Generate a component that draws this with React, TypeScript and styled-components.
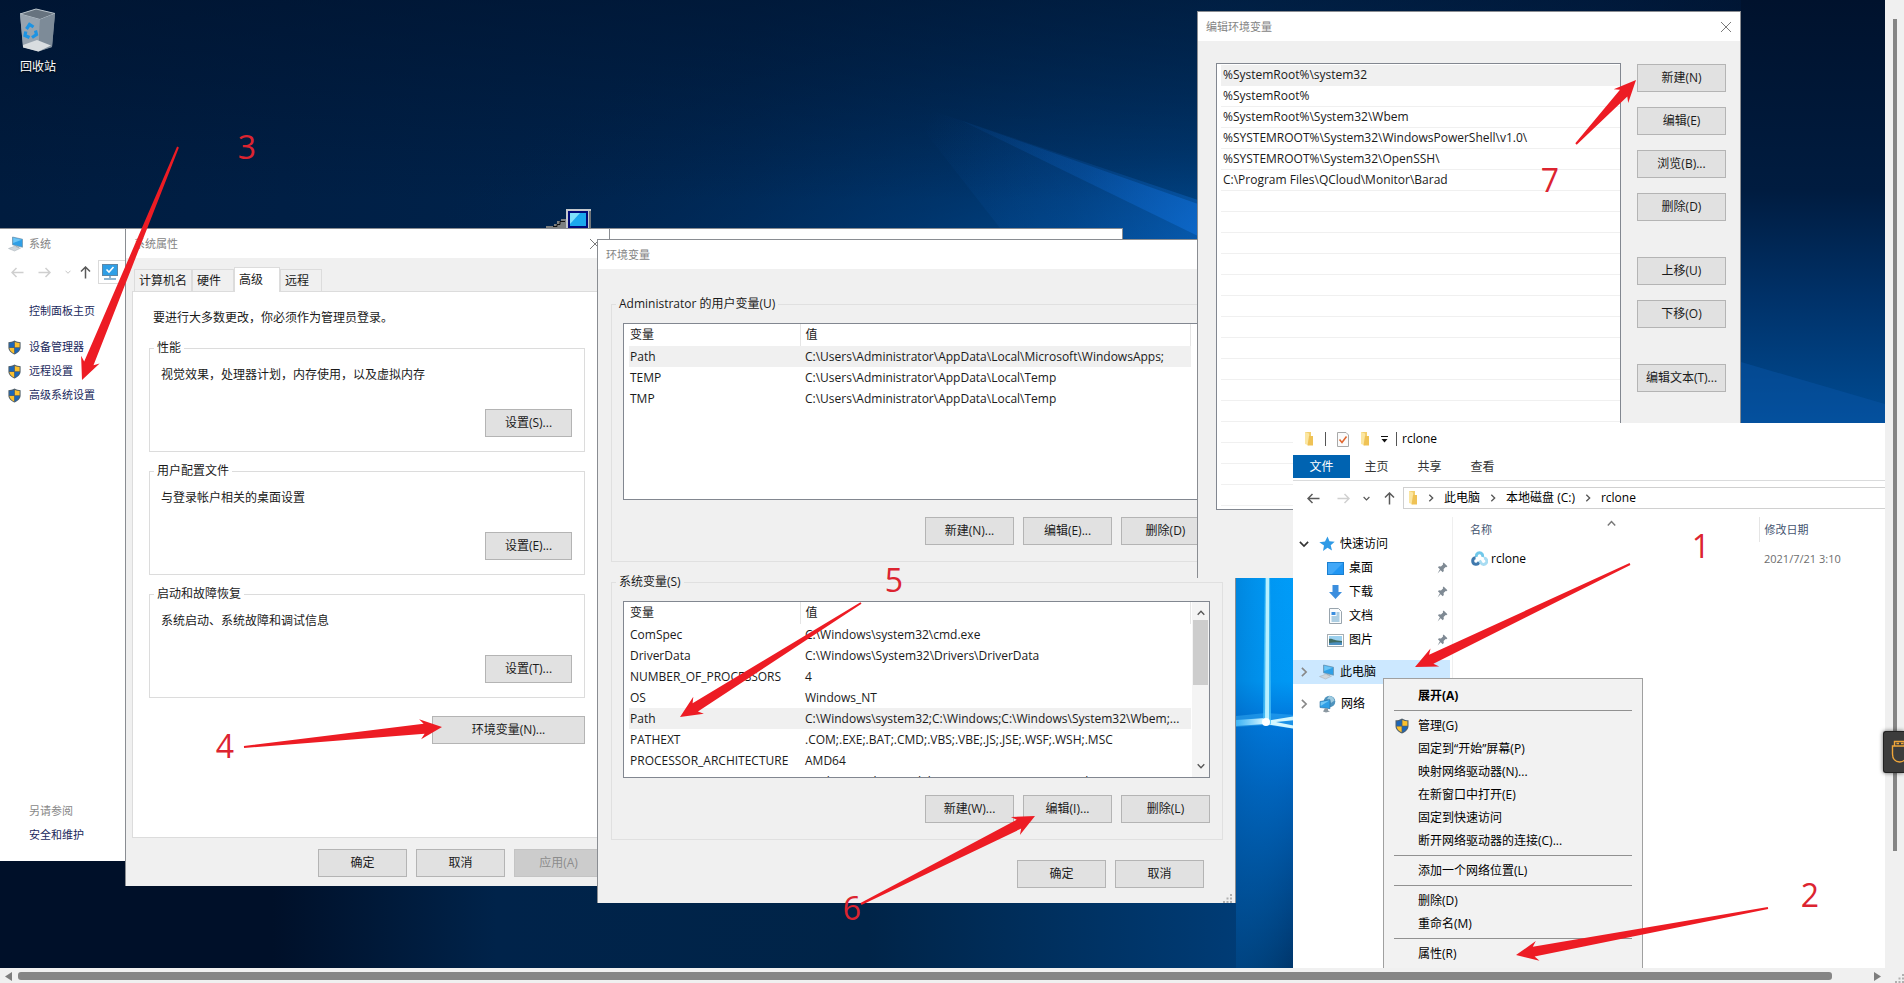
import React from "react";
import styled, { createGlobalStyle, css } from "styled-components";

const GlobalStyle = createGlobalStyle`
  * { box-sizing: border-box; }
  html, body { margin: 0; height: 100%; overflow: hidden; }
  body, button, table, input {
    font-family: "Open Sans", "Noto Sans CJK SC", sans-serif;
    font-size: 12px;
    line-height: 16px;
    color: #1a1a1a;
  }
  a { color: inherit; text-decoration: none; }
  ul { list-style: none; margin: 0; padding: 0; }
  svg { display: block; flex: none; }
`;

/* ---------- page frame ---------- */

const Viewer = styled.div`
  display: grid;
  grid-template-columns: minmax(0, 1fr) 19px;
  grid-template-rows: minmax(0, 1fr) 15px;
  height: 100vh;
  background: #f0f0f0;
  position: relative;
  overflow: hidden;
`;

const Desktop = styled.main`
  position: relative;
  overflow: hidden;
  background: #001a3a;
`;

const VerticalBar = styled.div`
  display: flex;
  justify-content: center;
  padding: 19px 0 117px;
  margin-left: 1px;
`;

const VerticalThumb = styled.div`
  width: 4px;
  background: #858585;
`;

const HorizontalBar = styled.div`
  display: flex;
  align-items: center;
  gap: 6px;
  padding: 1px 4px 0 5px;
`;

const HorizontalThumb = styled.div`
  flex: 1;
  height: 8px;
  margin-right: 36px;
  border-radius: 3px;
  background: #858585;
`;

const Corner = styled.div`
  display: flex;
  justify-content: flex-end;
  align-items: flex-end;
`;

const UsbTab = styled.button`
  position: absolute;
  right: 0;
  top: 731px;
  width: 21px;
  height: 42px;
  padding: 0 0 0 7px;
  border: 1px solid #222;
  border-right: 0;
  border-radius: 3px 0 0 3px;
  background: #3c3c3c;
  box-shadow: 0 0 4px rgba(0, 0, 0, 0.6);
  overflow: hidden;
`;

/* ---------- desktop ---------- */

const Wallpaper = styled.svg`
  position: absolute;
  inset: 0;
`;

const Shortcut = styled.a`
  position: absolute;
  left: 8px;
  top: 8px;
  width: 60px;
  display: flex;
  flex-direction: column;
  align-items: center;
  gap: 7px;
  color: #fff;
  text-shadow: 0 1px 2px #000;
`;

const HiddenShortcut = styled.div`
  position: absolute;
  left: 546px;
  top: 209px;
`;

const Annotations = styled.svg`
  position: absolute;
  inset: 0;
  pointer-events: none;
`;

const StepNumber = styled.text`
  font-size: 32px;
  fill: #dc2430;
  text-anchor: middle;
`;

/* ---------- windows ---------- */

const Frame = styled.section<{ $x: number; $y: number; $w: number; $h: number; $bg?: string }>`
  position: absolute;
  left: ${(p) => p.$x}px;
  top: ${(p) => p.$y}px;
  width: ${(p) => p.$w}px;
  height: ${(p) => p.$h}px;
  display: flex;
  flex-direction: column;
  background: ${(p) => p.$bg ?? "#f0f0f0"};
  border: 1px solid #8a8d92;
  border-bottom: 0;
`;

const TitleBar = styled.header`
  display: flex;
  align-items: center;
  gap: 5px;
  height: 29px;
  flex: none;
  padding: 0 8px;
  background: #fff;
  color: #848484;
  font-size: 11px;
`;

const TitleText = styled.h2`
  flex: 1;
  margin: 0;
  font-size: 11px;
  font-weight: 400;
`;

const IconButton = styled.button`
  display: flex;
  align-items: center;
  justify-content: center;
  padding: 0;
  border: 0;
  background: none;
`;

const CaptionButtons = styled.div`
  display: flex;
  gap: 34px;
  padding-right: 8px;
`;

const PushButton = styled.button<{ $w?: number }>`
  width: ${(p) => p.$w ?? 89}px;
  height: 28px;
  padding: 0;
  flex: none;
  border: 1px solid #b4b4b4;
  background: #e1e1e1;
  white-space: nowrap;
  &:disabled {
    background: #cccccc;
    border-color: #c4c4c4;
    color: #8c8c8c;
  }
`;

const Group = styled.fieldset<{ $edge?: string }>`
  min-width: 0;
  margin: 0;
  padding: 11px 12px 14px 11px;
  border: 1px solid ${(p) => p.$edge ?? "#dcdcdc"};
`;

const GroupTitle = styled.legend`
  margin-left: -7px;
  padding: 0 3px;
  height: 16px;
`;

const ButtonRow = styled.div<{ $top?: number; $right?: number }>`
  display: flex;
  justify-content: flex-end;
  gap: 9px;
  margin-top: ${(p) => p.$top ?? 0}px;
  padding-right: ${(p) => p.$right ?? 0}px;
`;

const NavCluster = styled.div<{ $gap: number }>`
  display: flex;
  align-items: center;
  gap: ${(p) => p.$gap}px;
`;

/* ---------- system window ---------- */

const SystemSide = styled.nav`
  display: flex;
  flex-direction: column;
  flex: 1;
  padding: 0 6px 14px;
  font-size: 11px;
  color: #20285c;
`;

const SystemNav = styled.div`
  display: flex;
  align-items: center;
  height: 28px;
  flex: none;
  padding-left: 11px;
  gap: 14px;
`;

const SystemAddress = styled.div`
  display: flex;
  align-items: center;
  width: 400px;
  height: 24px;
  padding-left: 2px;
  margin-left: -8px;
  border: 1px solid #dadada;
`;

const SideLink = styled.a<{ $top?: number; $muted?: boolean }>`
  display: flex;
  align-items: center;
  gap: 7px;
  height: 24px;
  margin-top: ${(p) => p.$top ?? 0}px;
  padding-left: ${(p) => (p.$top !== undefined ? 23 : 1)}px;
  color: ${(p) => (p.$muted ? "#888" : "#20285c")};
`;

const Shields = styled.div`
  margin: 12px 0 auto;
`;

/* ---------- system properties ---------- */

const TabStrip = styled.div`
  display: flex;
  align-items: flex-end;
  padding: 9px 0 0 8px;
`;

const Tab = styled.button<{ $active?: boolean }>`
  min-width: ${(p) => (p.$active ? 46 : 42)}px;
  height: ${(p) => (p.$active ? 25 : 22)}px;
  padding: 0 4px;
  margin-bottom: ${(p) => (p.$active ? -1 : 0)}px;
  border: 1px solid #dcdcdc;
  border-bottom: 0;
  background: ${(p) => (p.$active ? "#fff" : "#f0f0f0")};
  text-align: left;
  white-space: nowrap;
  z-index: ${(p) => (p.$active ? 1 : 0)};
`;

const TabPanel = styled.div`
  display: flex;
  flex-direction: column;
  height: 547px;
  margin: 0 7px 0 6px;
  padding: 18px 16px 0;
  border: 1px solid #dcdcdc;
  background: #fff;
`;

const Notice = styled.p`
  margin: 0 0 14px 4px;
`;

const Settings = styled.div`
  display: flex;
  flex-direction: column;
  gap: 11px;
`;

const Description = styled.p`
  margin: 0;
`;

/* ---------- environment variables ---------- */

const EnvBody = styled.div`
  display: flex;
  flex-direction: column;
  gap: 12px;
  padding: 27px 12px 0 13px;
`;

const VarGroup = styled(Group)`
  padding-bottom: 16px;
`;

const ListFrame = styled.div`
  display: flex;
  height: 177px;
  padding-left: 5px;
  border: 1px solid #828790;
  background: #fff;
  overflow: hidden;
`;

const VarTable = styled.table`
  flex: 1;
  align-self: flex-start;
  table-layout: fixed;
  border-collapse: collapse;
  width: 562px;
  margin-right: 1px;
  col:first-child { width: 171px; }
  th, td {
    height: 21px;
    padding: 0 0 0 5px;
    text-align: left;
    font-weight: 400;
    white-space: nowrap;
  }
  th { height: 22px; border-right: 1px solid #e5e5e5; }
  th:first-child, td:first-child { padding-left: 1px; }
`;

const VarRow = styled.tr<{ $selected?: boolean }>`
  background: ${(p) => (p.$selected ? "#f0f0f0" : "transparent")};
`;

const ListScroll = styled.div<{ $show: boolean }>`
  display: flex;
  flex-direction: column;
  align-items: center;
  width: 17px;
  padding: 7px 0;
  gap: 3px;
  background: ${(p) => (p.$show ? "#f4f4f4" : "#fff")};
  visibility: ${(p) => (p.$show ? "visible" : "hidden")};
`;

const ListThumb = styled.div`
  width: 15px;
  height: 65px;
  margin-bottom: auto;
  background: #cdcdcd;
`;

const ResizeGrip = styled.div`
  display: flex;
  justify-content: flex-end;
  padding: 6px 3px 0 0;
`;

/* ---------- edit environment variable ---------- */

const EditBody = styled.div`
  display: flex;
  gap: 16px;
  padding: 22px 14px 0 18px;
`;

const PathList = styled.ul`
  flex: 1;
  height: 447px;
  padding: 1px 0 0 4px;
  border: 1px solid #828790;
  background: #fff;
`;

const PathItem = styled.li<{ $selected?: boolean }>`
  height: 21px;
  padding: 2px 0 0 2px;
  border-bottom: 1px solid #f0f0f0;
  background: ${(p) => (p.$selected ? "#f0f0f0" : "#fff")};
  white-space: nowrap;
`;

const ButtonColumn = styled.div`
  display: flex;
  flex-direction: column;
  gap: 36px;
  padding-top: 1px;
`;

const ButtonCluster = styled.div`
  display: flex;
  flex-direction: column;
  gap: 15px;
`;

/* ---------- explorer ---------- */

const Explorer = styled.section`
  position: absolute;
  left: 1293px;
  right: 0;
  top: 423px;
  bottom: 0;
  display: flex;
  flex-direction: column;
  background: #fff;
  color: #000;
`;

const QuickBar = styled.header`
  display: flex;
  align-items: center;
  height: 32px;
  padding-left: 11px;
  gap: 11px;
  flex: none;
`;

const BarSeparator = styled.span`
  width: 1px;
  height: 14px;
  background: #555;
`;

const ExplorerTitle = styled.h2`
  margin: 0 0 0 -6px;
  font-size: 12px;
  font-weight: 400;
`;

const Ribbon = styled.div`
  display: flex;
  height: 26px;
  flex: none;
  border-bottom: 1px solid #dadbdc;
`;

const RibbonTab = styled.button<{ $primary?: boolean }>`
  height: 23px;
  padding: 0;
  width: ${(p) => (p.$primary ? 57 : 53)}px;
  border: 0;
  background: ${(p) => (p.$primary ? "#0063b1" : "transparent")};
  color: ${(p) => (p.$primary ? "#fff" : "#333")};
`;

const AddressRow = styled.div`
  display: flex;
  align-items: center;
  height: 34px;
  flex: none;
  padding-left: 14px;
  gap: 17px;
`;

const Breadcrumb = styled.nav`
  display: flex;
  align-items: center;
  flex: 1;
  gap: 9px;
  height: 22px;
  margin-left: -10px;
  padding-left: 4px;
  border: 1px solid #d0d0d0;
  border-right: 0;
`;

const Content = styled.div`
  display: grid;
  grid-template-columns: 160px minmax(0, 1fr);
  flex: 1;
  padding-top: 2px;
`;

const Tree = styled.nav`
  padding-top: 15px;
  border-right: 1px solid #efefef;
`;

const TreeItem = styled.a<{ $child?: boolean; $selected?: boolean; $gap?: number }>`
  display: flex;
  align-items: center;
  height: 24px;
  gap: 5px;
  margin: ${(p) => p.$gap ?? 0}px 2px 0 0;
  padding: 0 2px 0 ${(p) => (p.$child ? 34 : 6)}px;
  background: ${(p) => (p.$selected ? "#cce8ff" : "transparent")};
`;

const TreeLabel = styled.span`
  flex: 1;
`;

const Twisty = styled.span`
  width: 15px;
`;

const Files = styled.table`
  align-self: start;
  width: 100%;
  table-layout: fixed;
  border-collapse: collapse;
  th, td { padding: 0 0 0 5px; text-align: left; font-weight: 400; }
  th { height: 25px; color: #44546f; font-size: 11px; }
  th:first-child { width: 306px; padding-left: 17px; border-right: 1px solid #e5e5e5; }
  td { height: 34px; color: #6d6d6d; font-size: 11px; }
  td:first-child { padding-left: 18px; }
`;

const SortHead = styled.span`
  display: grid;
  grid-template-columns: 137px auto;
  align-items: start;
  > svg { margin-top: -3px; }
`;

const FileLink = styled.a`
  display: flex;
  align-items: center;
  gap: 3px;
  color: #000;
  font-size: 12px;
`;

const ContextMenu = styled.ul`
  position: absolute;
  left: 90px;
  top: 255px;
  bottom: 0;
  width: 260px;
  padding: 5px 10px 0;
  border: 1px solid #a0a0a0;
  border-bottom: 0;
  background: #f2f2f2;
`;

const MenuItem = styled.button<{ $bold?: boolean }>`
  display: grid;
  grid-template-columns: 16px auto;
  gap: 8px;
  align-items: center;
  width: 100%;
  height: 23px;
  padding: 0;
  border: 0;
  background: none;
  color: #000;
  text-align: left;
  ${(p) => p.$bold && css`font-weight: 700;`}
`;

const MenuRule = styled.li`
  height: 1px;
  margin: 3px 0;
  background: #919191;
`;

/* ---------- icons ---------- */

const CloseIcon = () => (
  <svg width="12" height="12" viewBox="0 0 12 12" stroke="#7a7a7a" fill="none">
    <path d="M1 1l10 10M11 1L1 11" />
  </svg>
);

const ShieldIcon = ({ size = 15 }: { size?: number }) => (
  <svg width={size} height={size} viewBox="0 0 16 16">
    <path d="M8 .5C10 1.800 12.500 2.300 14.500 2.300V8c0 3.600-3 6-6.500 7.500C4.500 14 1.500 11.600 1.500 8V2.300C3.500 2.300 6 1.800 8 .5z" fill="#51606b" />
    <path d="M7.600 2v5.700H2.600V3.300C4.500 3.200 6 2.800 7.600 2z" fill="#1c66b8" />
    <path d="M8.400 2v5.700h5V3.300C11.500 3.200 10 2.800 8.400 2z" fill="#fbc02d" />
    <path d="M7.600 8.400v5.900C5 13 2.800 11 2.600 8.400z" fill="#fbc02d" />
    <path d="M8.400 8.400v5.900c2.600-1.300 4.800-3.300 5-5.900z" fill="#1c66b8" />
  </svg>
);

const ComputerIcon = ({ size = 16 }: { size?: number }) => (
  <svg width={size} height={size} viewBox="0 0 16 16">
    <path d="M4.500 1l10 2.200v8L4.500 8.800z" fill="#2f9fe6" stroke="#6d8fa8" strokeWidth=".7" />
    <path d="M5.200 1.800l8.600 2L5.200 7z" fill="#6cc5f5" />
    <path d="M8 10l3 .8v2L7 13z" fill="#9aa7b0" />
    <path d="M.5 12.500l6-2.200 6 1.900-6 2.800z" fill="#cfd6db" stroke="#a3adb4" strokeWidth=".5" />
  </svg>
);

const NetworkIcon = () => (
  <svg width="17" height="18" viewBox="0 0 17 18">
    <circle cx="10.500" cy="6.500" r="5.800" fill="#4f93bd" />
    <path d="M10 1c3-.5 5 2 5.600 4.500L12 8l-1-3-3-1z" fill="#9fcbe0" />
    <path d="M1 6.500l10-1.800v9L1 12.500z" fill="#2f9fe6" stroke="#2b6f9f" strokeWidth=".6" />
    <path d="M1.600 7.200l8.800-1.600L1.600 11z" fill="#74c8f5" />
    <path d="M6 13.300l3 .3v1.800l2 1-4 1-3-1z" fill="#8b98a1" />
  </svg>
);

const MonitorIcon = () => (
  <svg width="18" height="18" viewBox="0 0 18 18">
    <rect x="1.500" y="1.500" width="15" height="11" fill="#2f9fe6" stroke="#5f87a5" />
    <path d="M5.500 6.500l2.500 2.500 4.500-5" stroke="#fff" strokeWidth="1.600" fill="none" />
    <path d="M8 13h2v2h5v2H3v-2h5z" fill="#8fb6d1" />
  </svg>
);

const Arrow = ({ dir, color = "#5a5a5a" }: { dir: "left" | "right" | "up"; color?: string }) => {
  const turn = { right: 0, left: 180, up: 270 }[dir];
  return (
    <svg width="13" height="13" viewBox="0 0 13 13" stroke={color} strokeWidth="1.500" fill="none">
      <g transform={`rotate(${turn} 6.500 6.500)`}>
        <path d="M.5 6.500h11.500M7.500 2l4.500 4.500L7.500 11" />
      </g>
    </svg>
  );
};

const Chevron = ({ dir, size = 8, color = "#555" }: { dir: "right" | "down" | "up"; size?: number; color?: string }) => {
  const turn = { right: 0, down: 90, up: 270 }[dir];
  return (
    <svg width={size} height={size} viewBox="0 0 8 8" stroke={color} strokeWidth="1.300" fill="none">
      <path d="M2.300 .7L5.700 4 2.300 7.300" transform={`rotate(${turn} 4 4)`} />
    </svg>
  );
};

const FolderIcon = () => (
  <svg width="10" height="16" viewBox="0 0 10 16">
    <path d="M1 1h6v12H1z" fill="#f3cf6d" />
    <path d="M1 1l4 1.500v12L1 13z" fill="#fbe6a2" />
    <path d="M5 5h4v9.500H3.500z" fill="#efc255" />
  </svg>
);

const CheckDocIcon = () => (
  <svg width="12" height="15" viewBox="0 0 12 15">
    <path d="M.5 .5h8.500L11.500 3v11.500H.5z" fill="#fbfbfb" stroke="#a9a9a9" />
    <path d="M2.500 7.500L5 10.500l4.500-6" stroke="#e2672f" strokeWidth="1.600" fill="none" />
  </svg>
);

const DropIcon = () => (
  <svg width="7" height="7" viewBox="0 0 7 7">
    <path d="M0 0h7v1H0zM.5 3h6l-3 3.500z" fill="#111" />
  </svg>
);

const StarIcon = () => (
  <svg width="16" height="16" viewBox="0 0 16 16">
    <path d="M8.500 .5l2 4.800 5.200.4-4 3.500 1.300 5.300-4.500-2.800L4 15l1-5.500L.3 6.300l5.700-.7z" fill="#2f9ae6" />
  </svg>
);

const DesktopIcon = () => (
  <svg width="17" height="13" viewBox="0 0 17 13">
    <rect x=".5" y=".5" width="16" height="12" fill="#2196f3" stroke="#1a7fd0" />
    <path d="M1 1h15L5 12H1z" fill="#42a8f8" />
  </svg>
);

const DownloadIcon = () => (
  <svg width="17" height="16" viewBox="0 0 17 16">
    <path d="M5.500 1h6v7H15l-6.500 7L2 8h3.500z" fill="#3b8ede" />
  </svg>
);

const DocumentIcon = () => (
  <svg width="17" height="16" viewBox="0 0 17 16">
    <path d="M2.500 .5h9l3 3v12h-12z" fill="#fafcfd" stroke="#98a4ad" />
    <path d="M4.500 4h4v3h-4z" fill="#3b8ede" />
    <path d="M4.500 9h8M4.500 11h8M4.500 13h8M9.500 5h3M9.500 7h3" stroke="#5fa0c8" />
  </svg>
);

const PictureIcon = () => (
  <svg width="17" height="13" viewBox="0 0 17 13">
    <rect x=".5" y=".5" width="16" height="12" fill="#fff" stroke="#a6aeb3" />
    <path d="M2 2h13v5H2z" fill="#9bd0ee" />
    <path d="M2 5c3-1 5 2 13 2v4H2z" fill="#3f6b62" />
    <path d="M2 9c4-1 9-1 13-.5V11H2z" fill="#4c8fc0" />
  </svg>
);

const PinIcon = () => (
  <svg width="11" height="12" viewBox="0 0 10 11">
    <path d="M6 .5l3.500 3.500-1 .8-.6-.2L6 6.500l.2 1.800-1 1L3.300 7.500.5 10.500 2.600 6.700.8 4.900l1-1 1.800.2 1.900-1.900-.2-.8z" fill="#7f8a94" />
  </svg>
);

const RcloneIcon = () => (
  <svg width="17" height="16" viewBox="0 0 17 16" fill="none" strokeWidth="3">
    <path d="M5.500 6a3.200 3.200 0 1 1 6 0" stroke="#70c8ea" />
    <path d="M8 10.800a3.200 3.200 0 1 1-3.500-4" stroke="#3f79ad" />
    <path d="M8.500 9.500l1.500 2.500a3.200 3.200 0 1 0 3-5" stroke="#a8dcf2" />
  </svg>
);

const RecycleBinIcon = () => (
  <svg width="38" height="44" viewBox="0 0 38 44">
    <path d="M1 6L17 1l19 4.500L33 39l-14 4.500L4 39z" fill="#8b98a5" opacity=".9" />
    <path d="M1 6L17 1l19 4.500-15 6z" fill="#67737f" stroke="#b9c3cb" />
    <path d="M1 6l20 5.500-1.500 31.500L4 39z" fill="#97a3af" />
    <path d="M21 11.500L36 5.500 33 39l-13.500 4.500z" fill="#7d8b98" />
    <path d="M4 37l14-5 14 5.500-12.500 6L4 39.500z" fill="#d9dde0" />
    <g fill="none" stroke="#1c93e3" strokeWidth="3.200">
      <path d="M7.500 21l3-4.500 4 2.500" />
      <path d="M16.500 22.500l1 4-4.500 3" />
      <path d="M10.500 29.500l-4.500-2 .8-4" />
    </g>
  </svg>
);

const OldComputerIcon = () => (
  <svg width="46" height="20" viewBox="0 0 46 20">
    <path d="M20 0h25v20H20z" fill="#c4c8cc" />
    <path d="M43 2h2v18h-2z" fill="#6f7478" />
    <path d="M22 2h20v17H22z" fill="#000a7a" />
    <path d="M24 4h16v13H24z" fill="#1aa7ee" />
    <path d="M24 4h10l-10 11z" fill="#7fe0fb" />
    <path d="M0 17h8v-2h3v-3h4v-2h5v10H0z" fill="#7c7f80" />
    <path d="M7 17.500h4v-2h3v-3h5" stroke="#111" fill="none" />
  </svg>
);

const GripDots = ({ color = "#b0b0b0" }: { color?: string }) => (
  <svg width="9" height="9" viewBox="0 0 9 9" fill={color}>
    <path d="M7 0h2v2H7zM3.500 3.500h2v2h-2zM7 3.500h2v2H7zM0 7h2v2H0zM3.500 7h2v2h-2zM7 7h2v2H7z" />
  </svg>
);

const ScrollArrow = ({ left }: { left?: boolean }) => (
  <svg width="7" height="9" viewBox="0 0 7 9" fill="#7d7d7d">
    <path d={left ? "M7 0v9L0 4.500z" : "M0 0v9l7-4.500z"} />
  </svg>
);

const UsbIcon = () => (
  <svg width="14" height="24" viewBox="0 0 14 24" fill="none" stroke="#f0a63a" strokeWidth="1.400">
    <path d="M3.500 6V1.500h10V6M1.500 6h14v8c0 5-3 8-7 8s-7-3-7-8z" />
    <path d="M5.500 3.500h2.500M10 3.500h2.500" />
  </svg>
);

/* ---------- desktop artwork ---------- */

const DesktopArt = () => (
  <Wallpaper width="100%" height="100%" viewBox="0 0 1885 968" preserveAspectRatio="xMinYMin slice">
    <defs>
      <linearGradient id="base" x1="0" x2="1" y1="0" y2="0">
        <stop offset="0" stopColor="#001c3f" />
        <stop offset=".15" stopColor="#001f45" />
        <stop offset=".4" stopColor="#00254f" />
        <stop offset=".65" stopColor="#003264" />
        <stop offset=".85" stopColor="#002450" />
        <stop offset="1" stopColor="#001533" />
      </linearGradient>
      <radialGradient id="glow" gradientUnits="userSpaceOnUse" cx="0" cy="0" r="1" gradientTransform="translate(1270 480) scale(950 560)">
        <stop offset="0" stopColor="#0084e0" />
        <stop offset=".3" stopColor="#0060b4" stopOpacity=".9" />
        <stop offset=".6" stopColor="#003f80" stopOpacity=".5" />
        <stop offset="1" stopColor="#002450" stopOpacity="0" />
      </radialGradient>
      <linearGradient id="topdark" x1="0" x2="0" y1="0" y2="1">
        <stop offset="0" stopColor="#001029" stopOpacity=".55" />
        <stop offset="1" stopColor="#001029" stopOpacity="0" />
      </linearGradient>
      <radialGradient id="ray" gradientUnits="userSpaceOnUse" cx="1230" cy="250" r="330">
        <stop offset="0" stopColor="#0f6fd6" stopOpacity=".9" />
        <stop offset=".5" stopColor="#0a5ab4" stopOpacity=".4" />
        <stop offset="1" stopColor="#0a5ab4" stopOpacity="0" />
      </radialGradient>
      <linearGradient id="side" x1="0" x2="0" y1="0" y2="1">
        <stop offset="0" stopColor="#00122d" />
        <stop offset=".45" stopColor="#001c40" />
        <stop offset=".7" stopColor="#003168" />
        <stop offset="1" stopColor="#004c94" />
      </linearGradient>
      <linearGradient id="pane" x1="0" x2="0" y1="0" y2="1">
        <stop offset="0" stopColor="#009cf8" />
        <stop offset=".28" stopColor="#0098f4" />
        <stop offset=".37" stopColor="#0078dc" />
        <stop offset=".55" stopColor="#0060b8" />
        <stop offset=".75" stopColor="#004c94" />
        <stop offset="1" stopColor="#003468" />
      </linearGradient>
      <linearGradient id="paneEdge" x1="0" x2="1" y1="0" y2="0">
        <stop offset="0" stopColor="#0060b0" stopOpacity=".35" />
        <stop offset="1" stopColor="#0090f0" stopOpacity="0" />
      </linearGradient>
      <linearGradient id="strip" x1="0" x2="1" y1="0" y2="0">
        <stop offset="0" stopColor="#001029" />
        <stop offset=".22" stopColor="#001029" />
        <stop offset=".4" stopColor="#00234a" />
        <stop offset=".7" stopColor="#002448" />
        <stop offset="1" stopColor="#003c76" />
      </linearGradient>
      <linearGradient id="horizon" x1="0" x2="1" y1="0" y2="0">
        <stop offset="0" stopColor="#4cc4ff" stopOpacity=".7" />
        <stop offset="1" stopColor="#e8fcff" />
      </linearGradient>
    </defs>
    <rect width="1885" height="968" fill="url(#base)" />
    <rect width="1885" height="968" fill="url(#glow)" />
    <rect width="1885" height="200" fill="url(#topdark)" />
    <path d="M900 100L1198 200V245L1000 228z" fill="url(#ray)" opacity=".6" />
    <path d="M960 120L1198 204V236z" fill="url(#ray)" />
    <rect x="1741" width="144" height="423" fill="url(#side)" />
    <path d="M1741 362L1885 404V423H1741z" fill="#0a58ac" opacity=".4" />
    <rect y="860" width="1240" height="108" fill="url(#strip)" />
    <rect x="1236" y="570" width="60" height="398" fill="url(#pane)" />
    <rect x="1236" y="570" width="60" height="398" fill="url(#paneEdge)" />
    <path d="M1236 716l30-3 30 2v14l-30-4-30 2z" fill="#4cc4ff" opacity=".35" />
    <path d="M1236 720l30-2v6l-30 2z" fill="url(#horizon)" />
    <path d="M1266 721l30-5v4l-20 2 20 4v3l-30-5z" fill="#d4f7ff" />
    <path d="M1265 570h5l1 154h-8z" fill="#4fc4f8" opacity=".8" />
    <path d="M1266 570h3v154h-4z" fill="#b8f0ff" />
    <circle cx="1266" cy="722" r="4" fill="#fff" />
  </Wallpaper>
);

type Step = { n: number; label: [number, number]; tail: [number, number]; tip: [number, number] };

const steps: Step[] = [
  { n: 1, label: [1701, 558], tail: [1630, 564], tip: [1415, 667] },
  { n: 2, label: [1810, 907], tail: [1768, 908], tip: [1516, 955] },
  { n: 3, label: [247, 159], tail: [178, 147], tip: [82, 380] },
  { n: 4, label: [225, 758], tail: [244, 747], tip: [442, 727] },
  { n: 5, label: [894, 592], tail: [861, 603], tip: [680, 717] },
  { n: 6, label: [852, 920], tail: [861, 904], tip: [1035, 816] },
  { n: 7, label: [1550, 192], tail: [1576, 144], tip: [1636, 80] },
];

function arrowPoints([x0, y0]: [number, number], [x1, y1]: [number, number]) {
  const len = Math.hypot(x1 - x0, y1 - y0);
  const ux = (x1 - x0) / len;
  const uy = (y1 - y0) / len;
  const at = (back: number, side: number) =>
    `${(x1 - ux * back - uy * side).toFixed(1)},${(y1 - uy * back + ux * side).toFixed(1)}`;
  return [at(len, 1), at(18, 5), at(22, 10), at(0, 0), at(22, -10), at(18, -5), at(len, -1)].join(" ");
}

const StepMarks = () => (
  <Annotations width="100%" height="100%">
    {steps.map((s) => (
      <g key={s.n}>
        <polygon points={arrowPoints(s.tail, s.tip)} fill="#ed1c24" />
        <StepNumber x={s.label[0]} y={s.label[1]}>{s.n}</StepNumber>
      </g>
    ))}
  </Annotations>
);

/* ---------- windows ---------- */

const SystemWindow = () => (
  <Frame $x={-1} $y={228} $w={1124} $h={633} $bg="#fff">
    <TitleBar>
      <ComputerIcon />
      <TitleText>系统</TitleText>
      <CaptionButtons>
        <IconButton aria-label="最大化">
          <svg width="10" height="10" viewBox="0 0 10 10" fill="none" stroke="#7a7a7a"><rect x=".5" y=".5" width="9" height="9" /></svg>
        </IconButton>
        <IconButton aria-label="关闭"><CloseIcon /></IconButton>
      </CaptionButtons>
    </TitleBar>
    <SystemNav>
      <Arrow dir="left" color="#cfcfcf" />
      <Arrow dir="right" color="#cfcfcf" />
      <NavCluster $gap={8}>
        <Chevron dir="down" size={6} color="#c4c4c4" />
        <Arrow dir="up" />
      </NavCluster>
      <SystemAddress><MonitorIcon /></SystemAddress>
    </SystemNav>
    <SystemSide>
      <SideLink href="#home" $top={13}>控制面板主页</SideLink>
      <Shields>
        {["设备管理器", "远程设置", "高级系统设置"].map((t) => (
          <SideLink key={t} href="#tool"><ShieldIcon />{t}</SideLink>
        ))}
      </Shields>
      <SideLink as="span" $top={0} $muted>另请参阅</SideLink>
      <SideLink href="#security" $top={0}>安全和维护</SideLink>
    </SystemSide>
  </Frame>
);

const settingGroups = [
  { title: "性能", text: "视觉效果，处理器计划，内存使用，以及虚拟内存", button: "设置(S)..." },
  { title: "用户配置文件", text: "与登录帐户相关的桌面设置", button: "设置(E)..." },
  { title: "启动和故障恢复", text: "系统启动、系统故障和调试信息", button: "设置(T)..." },
];

const PropertiesWindow = () => (
  <Frame $x={125} $y={228} $w={485} $h={658}>
    <TitleBar>
      <TitleText>系统属性</TitleText>
      <IconButton aria-label="关闭"><CloseIcon /></IconButton>
    </TitleBar>
    <TabStrip>
      <Tab>计算机名</Tab>
      <Tab>硬件</Tab>
      <Tab $active>高级</Tab>
      <Tab>远程</Tab>
    </TabStrip>
    <TabPanel>
      <Notice>要进行大多数更改，你必须作为管理员登录。</Notice>
      <Settings>
        {settingGroups.map((g) => (
          <Group key={g.title}>
            <GroupTitle>{g.title}</GroupTitle>
            <Description>{g.text}</Description>
            <ButtonRow $top={26}><PushButton $w={87}>{g.button}</PushButton></ButtonRow>
          </Group>
        ))}
      </Settings>
      <ButtonRow $top={18}><PushButton $w={153}>环境变量(N)...</PushButton></ButtonRow>
    </TabPanel>
    <ButtonRow $top={11} $right={6}>
      <PushButton>确定</PushButton>
      <PushButton>取消</PushButton>
      <PushButton disabled>应用(A)</PushButton>
    </ButtonRow>
  </Frame>
);

const userVars = [
  ["Path", "C:\\Users\\Administrator\\AppData\\Local\\Microsoft\\WindowsApps;"],
  ["TEMP", "C:\\Users\\Administrator\\AppData\\Local\\Temp"],
  ["TMP", "C:\\Users\\Administrator\\AppData\\Local\\Temp"],
];

const systemVars = [
  ["ComSpec", "C:\\Windows\\system32\\cmd.exe"],
  ["DriverData", "C:\\Windows\\System32\\Drivers\\DriverData"],
  ["NUMBER_OF_PROCESSORS", "4"],
  ["OS", "Windows_NT"],
  ["Path", "C:\\Windows\\system32;C:\\Windows;C:\\Windows\\System32\\Wbem;..."],
  ["PATHEXT", ".COM;.EXE;.BAT;.CMD;.VBS;.VBE;.JS;.JSE;.WSF;.WSH;.MSC"],
  ["PROCESSOR_ARCHITECTURE", "AMD64"],
  ["PROCESSOR_IDENTIFIER", "Intel64 Family 6 Model 85 Stepping 5, GenuineIntel"],
];

const VariableGroup = ({ title, rows, buttons, scroll = false }: { title: string; rows: string[][]; buttons: string[]; scroll?: boolean }) => (
  <VarGroup $edge="#e0e0e0">
    <GroupTitle>{title}</GroupTitle>
    <ListFrame>
      <VarTable>
        <colgroup><col /><col /></colgroup>
        <thead><tr><th>变量</th><th>值</th></tr></thead>
        <tbody>
          {rows.map(([name, value]) => (
            <VarRow key={name} $selected={name === "Path"}><td>{name}</td><td>{value}</td></VarRow>
          ))}
        </tbody>
      </VarTable>
      <ListScroll $show={scroll}>
        <Chevron dir="up" />
        <ListThumb />
        <Chevron dir="down" />
      </ListScroll>
    </ListFrame>
    <ButtonRow $top={17}>
      {buttons.map((b) => <PushButton key={b}>{b}</PushButton>)}
    </ButtonRow>
  </VarGroup>
);

const EnvironmentWindow = () => (
  <Frame $x={597} $y={239} $w={639} $h={664}>
    <TitleBar><TitleText>环境变量</TitleText></TitleBar>
    <EnvBody>
      <VariableGroup title="Administrator 的用户变量(U)" rows={userVars} buttons={["新建(N)...", "编辑(E)...", "删除(D)"]} />
      <VariableGroup title="系统变量(S)" rows={systemVars} buttons={["新建(W)...", "编辑(I)...", "删除(L)"]} scroll />
    </EnvBody>
    <ButtonRow $top={20} $right={31}>
      <PushButton>确定</PushButton>
      <PushButton>取消</PushButton>
    </ButtonRow>
    <ResizeGrip><GripDots /></ResizeGrip>
  </Frame>
);

const pathEntries = [
  "%SystemRoot%\\system32",
  "%SystemRoot%",
  "%SystemRoot%\\System32\\Wbem",
  "%SYSTEMROOT%\\System32\\WindowsPowerShell\\v1.0\\",
  "%SYSTEMROOT%\\System32\\OpenSSH\\",
  "C:\\Program Files\\QCloud\\Monitor\\Barad",
  ...Array(15).fill(""),
];

const EditWindow = () => (
  <Frame $x={1197} $y={11} $w={544} $h={567}>
    <TitleBar>
      <TitleText>编辑环境变量</TitleText>
      <IconButton aria-label="关闭"><CloseIcon /></IconButton>
    </TitleBar>
    <EditBody>
      <PathList>
        {pathEntries.map((p, i) => <PathItem key={i} $selected={i === 0}>{p}</PathItem>)}
      </PathList>
      <ButtonColumn>
        <ButtonCluster>
          {["新建(N)", "编辑(E)", "浏览(B)...", "删除(D)"].map((b) => <PushButton key={b}>{b}</PushButton>)}
        </ButtonCluster>
        <ButtonCluster>
          {["上移(U)", "下移(O)"].map((b) => <PushButton key={b}>{b}</PushButton>)}
        </ButtonCluster>
        <PushButton>编辑文本(T)...</PushButton>
      </ButtonColumn>
    </EditBody>
  </Frame>
);

const quickItems = [
  { text: "桌面", icon: <DesktopIcon /> },
  { text: "下载", icon: <DownloadIcon /> },
  { text: "文档", icon: <DocumentIcon /> },
  { text: "图片", icon: <PictureIcon /> },
];

const menuSections = [
  ["展开(A)"],
  ["管理(G)", "固定到“开始”屏幕(P)", "映射网络驱动器(N)...", "在新窗口中打开(E)", "固定到快速访问", "断开网络驱动器的连接(C)..."],
  ["添加一个网络位置(L)"],
  ["删除(D)", "重命名(M)"],
  ["属性(R)"],
];

const ExplorerWindow = () => (
  <Explorer>
    <QuickBar>
      <FolderIcon />
      <BarSeparator />
      <CheckDocIcon />
      <FolderIcon />
      <NavCluster $gap={8}>
        <DropIcon />
        <BarSeparator />
      </NavCluster>
      <ExplorerTitle>rclone</ExplorerTitle>
    </QuickBar>
    <Ribbon>
      <RibbonTab $primary>文件</RibbonTab>
      <RibbonTab>主页</RibbonTab>
      <RibbonTab>共享</RibbonTab>
      <RibbonTab>查看</RibbonTab>
    </Ribbon>
    <AddressRow>
      <Arrow dir="left" />
      <NavCluster $gap={13}>
        <Arrow dir="right" color="#d0d0d0" />
        <Chevron dir="down" size={7} />
        <Arrow dir="up" />
      </NavCluster>
      <Breadcrumb>
        <FolderIcon />
        <Chevron dir="right" />
        <a href="#pc">此电脑</a>
        <Chevron dir="right" />
        <a href="#c">本地磁盘 (C:)</a>
        <Chevron dir="right" />
        <a href="#rclone">rclone</a>
      </Breadcrumb>
    </AddressRow>
    <Content>
      <Tree>
        <TreeItem href="#quick">
          <Twisty><Chevron dir="down" size={10} color="#333" /></Twisty>
          <StarIcon />
          <TreeLabel>快速访问</TreeLabel>
        </TreeItem>
        {quickItems.map((q) => (
          <TreeItem key={q.text} href="#folder" $child>{q.icon}<TreeLabel>{q.text}</TreeLabel><PinIcon /></TreeItem>
        ))}
        <TreeItem href="#pc" $selected $gap={8}>
          <Twisty><Chevron dir="right" size={10} color="#888" /></Twisty>
          <ComputerIcon />
          <TreeLabel>此电脑</TreeLabel>
        </TreeItem>
        <TreeItem href="#network" $gap={8}>
          <Twisty><Chevron dir="right" size={10} color="#888" /></Twisty>
          <NetworkIcon />
          <TreeLabel>网络</TreeLabel>
        </TreeItem>
      </Tree>
      <Files>
        <thead>
          <tr>
            <th><SortHead>名称<Chevron dir="up" size={9} color="#777" /></SortHead></th>
            <th>修改日期</th>
          </tr>
        </thead>
        <tbody>
          <tr>
            <td><FileLink href="#file"><RcloneIcon />rclone</FileLink></td>
            <td>2021/7/21 3:10</td>
          </tr>
        </tbody>
      </Files>
    </Content>
    <ContextMenu>
      {menuSections.map((items, i) => (
        <React.Fragment key={i}>
          {i > 0 && <MenuRule role="separator" />}
          {items.map((t) => (
            <li key={t}>
              <MenuItem $bold={i === 0}>
                {t === "管理(G)" ? <ShieldIcon size={16} /> : <span />}
                {t}
              </MenuItem>
            </li>
          ))}
        </React.Fragment>
      ))}
    </ContextMenu>
  </Explorer>
);

export default function App() {
  return (
    <Viewer>
      <GlobalStyle />
      <Desktop>
        <DesktopArt />
        <Shortcut href="#bin"><RecycleBinIcon />回收站</Shortcut>
        <HiddenShortcut><OldComputerIcon /></HiddenShortcut>
        <SystemWindow />
        <PropertiesWindow />
        <EnvironmentWindow />
        <EditWindow />
        <ExplorerWindow />
        <StepMarks />
      </Desktop>
      <VerticalBar><VerticalThumb /></VerticalBar>
      <HorizontalBar><ScrollArrow left /><HorizontalThumb /><ScrollArrow /></HorizontalBar>
      <Corner><GripDots /></Corner>
      <UsbTab aria-label="USB"><UsbIcon /></UsbTab>
    </Viewer>
  );
}
